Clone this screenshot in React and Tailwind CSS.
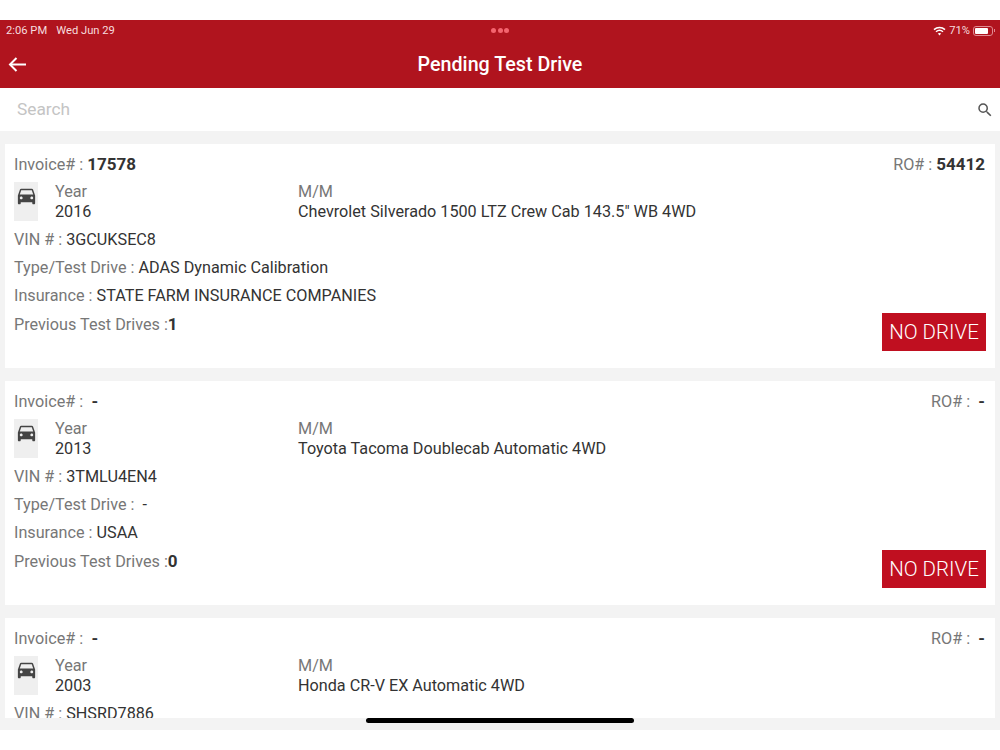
import React from 'react';
import { MdDirectionsCar, MdSearch } from 'react-icons/md';

const drives = [
  {
    invoice: '17578',
    ro: '54412',
    year: '2016',
    model: 'Chevrolet Silverado 1500 LTZ Crew Cab 143.5" WB 4WD',
    vin: '3GCUKSEC8',
    type: 'ADAS Dynamic Calibration',
    insurance: 'STATE FARM INSURANCE COMPANIES',
    previous: '1',
  },
  {
    invoice: '-',
    ro: '-',
    year: '2013',
    model: 'Toyota Tacoma Doublecab Automatic 4WD',
    vin: '3TMLU4EN4',
    type: '-',
    insurance: 'USAA',
    previous: '0',
  },
  {
    invoice: '-',
    ro: '-',
    year: '2003',
    model: 'Honda CR-V EX Automatic 4WD',
    vin: 'SHSRD7886',
    type: '-',
    insurance: '-',
    previous: '0',
  },
];

const StatusBar = () => (
  <div className="flex h-5 items-center justify-between pl-1.5 pr-[5px] pt-0.5 text-[11.2px] text-[#f6dcdf]">
    <div className="flex gap-[9px]">
      <span>2:06 PM</span>
      <span>Wed Jun 29</span>
    </div>
    <div className="flex items-center gap-[3px]">
      <svg width="13" height="10" viewBox="0 0 13 10" fill="none" stroke="#ffffff" strokeWidth="1.5">
        <path d="M1 3.6C4.2.7 8.8.7 12 3.6" />
        <path d="M3 5.7C5 4 8 4 10 5.7" />
        <path d="M6.5 9.6 4.8 7.6C5.8 6.9 7.2 6.9 8.2 7.6Z" fill="#ffffff" stroke="none" />
      </svg>
      <span>71%</span>
      <div className="flex items-center">
        <div className="h-[10px] w-[20px] rounded-[3px] border border-[#e08a92] p-px">
          <div className="h-full w-[13px] rounded-[1px] bg-white" />
        </div>
        <div className="ml-px h-[3px] w-px bg-[#e08a92]" />
      </div>
    </div>
  </div>
);

const DriveCard = ({ drive }) => (
  <div className="mb-[13px] flex h-[224px] shrink-0 flex-col bg-white pl-[9px] pr-[9px] pt-2 text-[16.2px] leading-6 text-[#333333]">
    <div className="flex justify-between pr-px">
      <div>
        <span className="text-[#777777]">Invoice# : </span>
        <span className="text-[17px] font-bold">{drive.invoice === '-' ? '\u00a0-' : drive.invoice}</span>
      </div>
      <div>
        <span className="text-[#777777]">RO# : </span>
        <span className="text-[17px] font-bold">{drive.ro === '-' ? '\u00a0-' : drive.ro}</span>
      </div>
    </div>
    <div className="mt-[5px] flex h-10">
      <div className="flex h-[39px] w-6 justify-center bg-[#efefef] pt-[2px]">
        <MdDirectionsCar size={23} color="#444444" />
      </div>
      <div className="ml-[17px] w-[243px] leading-[19.5px]">
        <div className="text-[#777777]">Year</div>
        <div>{drive.year}</div>
      </div>
      <div className="leading-[19.5px]">
        <div className="text-[#777777]">M/M</div>
        <div>{drive.model}</div>
      </div>
    </div>
    <div className="mt-[6px] flex flex-col gap-1">
      <div>
        <span className="text-[#777777]">VIN # : </span>
        {drive.vin}
      </div>
      <div>
        <span className="text-[#777777]">Type/Test Drive : </span>
        {drive.type === '-' ? '\u00a0-' : drive.type}
      </div>
      <div>
        <span className="text-[#777777]">Insurance : </span>
        {drive.insurance}
      </div>
      <div className="flex items-start justify-between">
        <div>
          <span className="text-[#777777]">Previous Test Drives :</span>
          <span className="text-[17px] font-bold">{drive.previous}</span>
        </div>
        <button className="mt-px h-[38px] w-[104px] bg-[#c00f20] text-[20.5px] font-[350] text-white">NO DRIVE</button>
      </div>
    </div>
  </div>
);

export default function App() {
  return (
    <div className="relative h-[750px] w-[1000px] overflow-hidden bg-white font-['Roboto',sans-serif]">
      <div className="h-5" />
      <div className="h-[68px] bg-[#b0141e] text-white">
        <StatusBar />
        <div className="relative flex h-12 items-center justify-center pt-px">
          <svg
            width="19"
            height="15"
            viewBox="0 0 19 15"
            fill="none"
            stroke="#ffffff"
            strokeWidth="2"
            className="absolute left-2 top-[17px]"
          >
            <path d="M18 7.5H2" />
            <path d="M8.5 1 2 7.5 8.5 14" />
          </svg>
          <h1 className="text-[19.7px] font-medium">Pending Test Drive</h1>
          <div className="absolute left-[491px] top-[-12px] flex gap-[1.5px]">
            <span className="h-[5px] w-[5px] rounded-full bg-[#f4656f]" />
            <span className="h-[5px] w-[5px] rounded-full bg-[#f4656f]" />
            <span className="h-[5px] w-[5px] rounded-full bg-[#f4656f]" />
          </div>
        </div>
      </div>
      <div className="flex h-[43px] items-center justify-between bg-white pl-[17px] pr-[6px]">
        <span className="text-[17.3px] text-[#c4c4c4]">Search</span>
        <MdSearch size={18} color="#555555" />
      </div>
      <div className="flex h-[599px] flex-col bg-[#f3f3f3] px-[5px] pt-[13px]">
        <div className="h-[574px] overflow-hidden">
          {drives.map((drive) => (
            <DriveCard key={drive.year} drive={drive} />
          ))}
        </div>
      </div>
      <div className="absolute left-[366px] top-[718px] h-[5px] w-[268px] rounded-full bg-black" />
    </div>
  );
}
